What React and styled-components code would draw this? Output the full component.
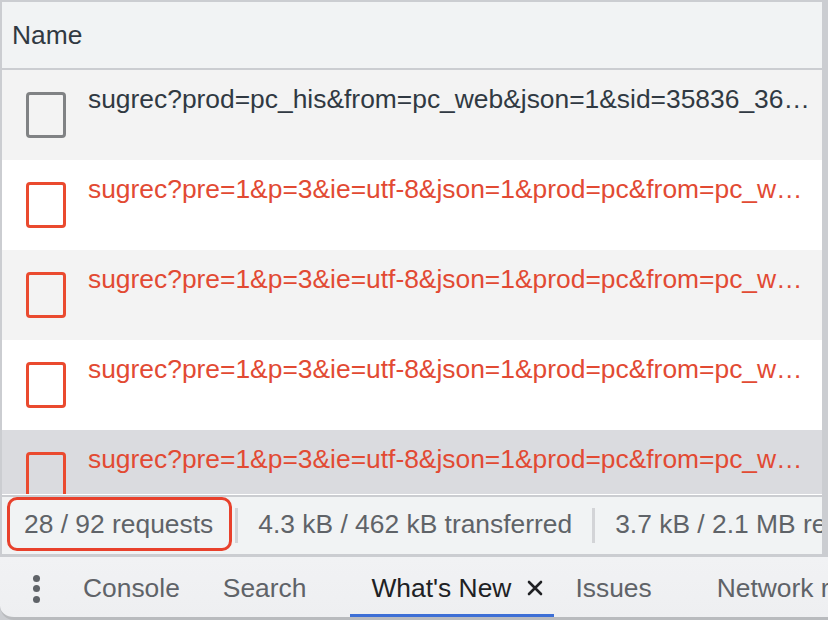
import React from "react";
import styled, { createGlobalStyle } from "styled-components";

const GlobalStyle = createGlobalStyle`
  html, body { margin: 0; padding: 0; background: #cbcdd1; }
  body { font-family: "Liberation Sans", Arial, sans-serif; }
  * { box-sizing: border-box; }
`;

const Frame = styled.div`
  width: 828px;
  height: 620px;
  padding: 2px 6px 0 2px;
  background: #cbcdd1;
  display: flex;
  flex-direction: column;
  overflow: hidden;
`;

const Panel = styled.div`
  flex: 1;
  display: flex;
  flex-direction: column;
  min-height: 0;
  font-size: 26.4px;
`;

const Header = styled.div`
  height: 68px;
  flex-shrink: 0;
  background: #f1f3f4;
  border-bottom: 2px solid #cbcdd1;
  display: flex;
  align-items: center;
  padding-left: 10px;
  color: #303942;
`;

const RowList = styled.div`
  height: 424px;
  flex-shrink: 0;
  overflow: hidden;
  display: flex;
  flex-direction: column;
`;

const Row = styled.div`
  height: 90px;
  flex-shrink: 0;
  display: flex;
  align-items: center;
  background: ${(p) => p.$bg};
  padding-left: 24px;
  padding-right: 8px;
  gap: 22px;
`;

const FileIcon = styled.div`
  width: 40px;
  height: 46px;
  flex-shrink: 0;
  border: 3px solid ${(p) => (p.$error ? "#ea4a2f" : "#808284")};
  border-radius: 4px;
`;

const RowName = styled.div`
  flex: 1;
  min-width: 0;
  align-self: flex-start;
  padding-top: 14px;
  white-space: nowrap;
  overflow: hidden;
  text-overflow: ellipsis;
  color: ${(p) => (p.$error ? "#e24a33" : "#303942")};
`;

const Divider = styled.div`
  flex-shrink: 0;
  height: 3px;
  border-top: 1px solid #ffffff;
  background: #cbcdd1;
`;

const StatusBar = styled.div`
  height: 60px;
  flex-shrink: 0;
  background: #f1f3f4;
  border-bottom: 3px solid #cbcdd1;
  display: flex;
  align-items: flex-start;
  color: #5f6368;
  white-space: nowrap;
  overflow: hidden;
`;

const StatusItem = styled.div`
  height: 54px;
  display: flex;
  align-items: center;
  padding: 0 20px;
  flex-shrink: 0;
  ${(p) =>
    p.$highlight &&
    `
    margin-left: 5px;
    border: 3px solid #e8412c;
    border-radius: 10px;
    padding: 0 16px 0 14px;
  `}
`;

const StatusSep = styled.div`
  width: 3px;
  height: 35px;
  margin-top: 11px;
  margin-left: ${(p) => p.$ml || 0}px;
  background: #d3d4d7;
  flex-shrink: 0;
`;

const TabBar = styled.div`
  height: 63px;
  flex-shrink: 0;
  margin: 0 -6px 0 -2px;
  background: linear-gradient(#f1f2f4, #eeeff1);
  border-bottom: 3px solid #b9bbbe;
  border-bottom-left-radius: 14px;
  display: flex;
  align-items: stretch;
  white-space: nowrap;
  overflow: hidden;
`;

const Kebab = styled.div`
  margin-left: 32px;
  margin-right: 20px;
  width: 8px;
  padding-top: 3px;
  display: flex;
  flex-direction: column;
  justify-content: center;
  align-items: center;
  gap: 3.5px;
  flex-shrink: 0;
`;

const Dot = styled.span`
  width: 7px;
  height: 7px;
  border-radius: 50%;
  background: #5f6368;
`;

const Tab = styled.div`
  display: flex;
  align-items: center;
  gap: 16px;
  padding: 5px ${(p) => (p.$closable ? 11 : 22)}px 0 ${(p) => (p.$first ? 23 : 21)}px;
  margin-left: ${(p) => p.$ml || 0}px;
  border-bottom: 3px solid ${(p) => (p.$active ? "#3d6fd6" : "transparent")};
  color: ${(p) => (p.$active ? "#202124" : "#5f6368")};
  flex-shrink: 0;
`;

const CloseIcon = () => (
  <svg width="16" height="16" viewBox="0 0 16 16" aria-hidden="true">
    <path d="M2 2 L14 14 M14 2 L2 14" stroke="#202124" strokeWidth="2.6" strokeLinecap="round" />
  </svg>
);

const rows = [
  { name: "sugrec?prod=pc_his&from=pc_web&json=1&sid=35836_36166_36263_36182", bg: "#f3f3f3", error: false },
  { name: "sugrec?pre=1&p=3&ie=utf-8&json=1&prod=pc&from=pc_web&sugsid=35836", bg: "#ffffff", error: true },
  { name: "sugrec?pre=1&p=3&ie=utf-8&json=1&prod=pc&from=pc_web&sugsid=35836", bg: "#f3f3f3", error: true },
  { name: "sugrec?pre=1&p=3&ie=utf-8&json=1&prod=pc&from=pc_web&sugsid=35836", bg: "#ffffff", error: true },
  { name: "sugrec?pre=1&p=3&ie=utf-8&json=1&prod=pc&from=pc_web&sugsid=35836", bg: "#dadbdf", error: true },
];

export default function App() {
  return (
    <>
      <GlobalStyle />
      <Frame>
        <Panel>
          <Header>Name</Header>
          <RowList>
            {rows.map((r, i) => (
              <Row key={i} $bg={r.bg}>
                <FileIcon $error={r.error} />
                <RowName $error={r.error}>{r.name}</RowName>
              </Row>
            ))}
          </RowList>
          <Divider />
          <StatusBar>
            <StatusItem $highlight>28 / 92 requests</StatusItem>
            <StatusSep $ml={3} />
            <StatusItem>4.3 kB / 462 kB transferred</StatusItem>
            <StatusSep />
            <StatusItem>3.7 kB / 2.1 MB resources</StatusItem>
          </StatusBar>
          <TabBar>
            <Kebab>
              <Dot />
              <Dot />
              <Dot />
            </Kebab>
            <Tab $first>Console</Tab>
            <Tab>Search</Tab>
            <Tab $active $closable $ml={22}>
              What's New
              <CloseIcon />
            </Tab>
            <Tab>Issues</Tab>
            <Tab $ml={22}>Network request blocking</Tab>
          </TabBar>
        </Panel>
      </Frame>
    </>
  );
}
